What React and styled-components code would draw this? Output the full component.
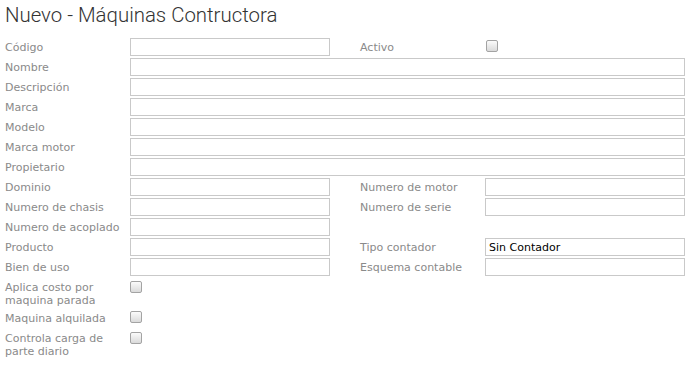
import React from "react";
import styled, { createGlobalStyle } from "styled-components";

const GlobalStyle = createGlobalStyle`
  html, body {
    margin: 0;
    padding: 0;
    background: #ffffff;
  }
`;

const Page = styled.div`
  width: 695px;
  padding: 0 10px 0 5px;
  box-sizing: border-box;
  font-family: "DejaVu Sans", Verdana, sans-serif;
`;

const Title = styled.h1`
  margin: 0;
  padding-top: 3px;
  height: 35px;
  font-family: Roboto, "Noto Sans", sans-serif;
  font-weight: 300;
  font-size: 20.4px;
  line-height: 24px;
  color: #333333;
`;

const Form = styled.div`
  display: grid;
  grid-template-columns: 125px 200px 30px 125px 200px;
  row-gap: 2px;
`;

const Label = styled.label`
  grid-column: ${(p) => p.$col || 1};
  font-size: 11px;
  color: #8a8a8a;
  line-height: ${(p) => (p.$wrap ? "13px" : "17px")};
  padding-top: ${(p) => (p.$wrap ? "3px" : "1px")};
  min-height: 17px;
`;

const Input = styled.input`
  grid-column: ${(p) => (p.$wide ? "2 / 6" : p.$col || 2)};
  height: 18px;
  box-sizing: border-box;
  border: 1px solid #c9c9c9;
  margin: 0;
  padding: 0 3px;
  font-family: "DejaVu Sans", Verdana, sans-serif;
  font-size: 11px;
  color: #000000;
  background: #ffffff;
  outline: none;
`;

const Check = styled.span`
  grid-column: ${(p) => p.$col || 2};
  display: block;
  width: 12px;
  height: 12px;
  margin-top: ${(p) => p.$top || 2}px;
  margin-left: ${(p) => p.$left || 0}px;
  box-sizing: border-box;
  border: 1px solid #a3a3a3;
  border-radius: 2px;
  background: linear-gradient(#fbfbfb, #dadada);
`;

const wide = ["Nombre", "Descripción", "Marca", "Modelo", "Marca motor", "Propietario"];

const App = () => {
  return (
    <Page>
      <GlobalStyle />
      <Title>Nuevo - Máquinas Contructora</Title>
      <Form>
        <Label>Código</Label>
        <Input />
        <Label $col={4}>Activo</Label>
        <Check $col={5} $left={1} />

        {wide.map((name) => (
          <React.Fragment key={name}>
            <Label>{name}</Label>
            <Input $wide />
          </React.Fragment>
        ))}

        <Label>Dominio</Label>
        <Input />
        <Label $col={4}>Numero de motor</Label>
        <Input $col={5} />

        <Label>Numero de chasis</Label>
        <Input />
        <Label $col={4}>Numero de serie</Label>
        <Input $col={5} />

        <Label>Numero de acoplado</Label>
        <Input />

        <Label>Producto</Label>
        <Input />
        <Label $col={4}>Tipo contador</Label>
        <Input $col={5} defaultValue="Sin Contador" />

        <Label>Bien de uso</Label>
        <Input />
        <Label $col={4}>Esquema contable</Label>
        <Input $col={5} />

        <Label $wrap>Aplica costo por<br />maquina parada</Label>
        <Check $top={3} />

        <Label>Maquina alquilada</Label>
        <Check $top={2} />

        <Label $wrap>Controla carga de<br />parte diario</Label>
        <Check $top={3} />
      </Form>
    </Page>
  );
};

export default App;
